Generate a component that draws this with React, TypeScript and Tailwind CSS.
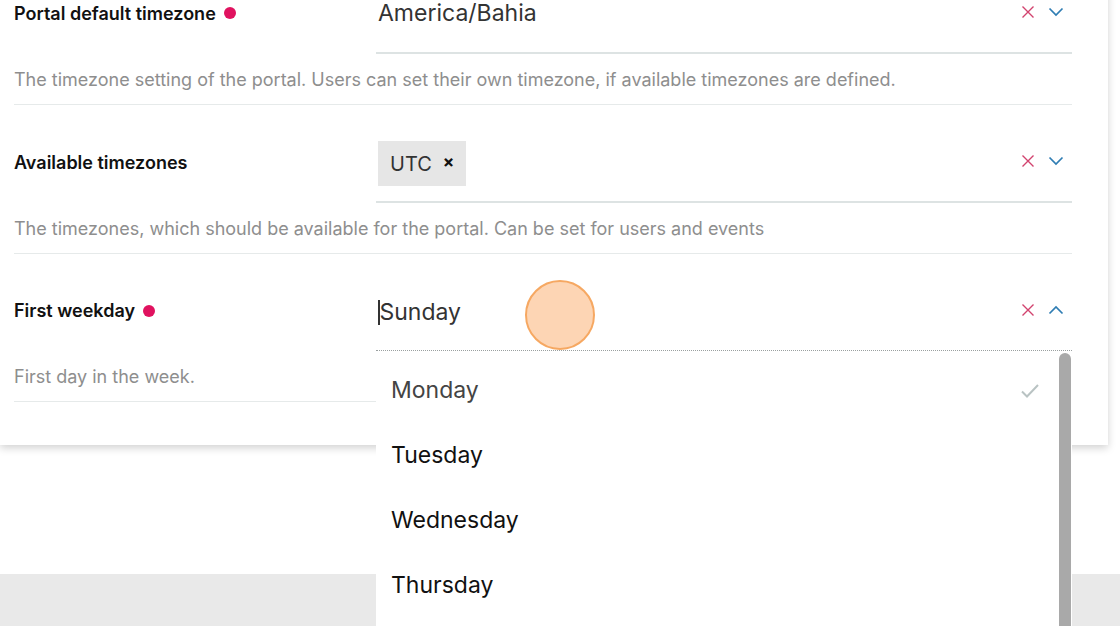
import React from "react";

const font = { fontFamily: "Inter, 'Noto Sans', sans-serif" };

function XIcon() {
  return (
    <svg width="14" height="14" viewBox="0 0 14 14" className="block">
      <path d="M1.5 1.5 L12.5 12.5 M12.5 1.5 L1.5 12.5" stroke="#d2436e" strokeWidth="1.4" fill="none" />
    </svg>
  );
}

function Chevron({ up }: { up?: boolean }) {
  return (
    <svg width="16" height="10" viewBox="0 0 16 10" className="block">
      <path
        d={up ? "M1.5 8.5 L8 2 L14.5 8.5" : "M1.5 1.5 L8 8 L14.5 1.5"}
        stroke="#2f7db3"
        strokeWidth="1.7"
        fill="none"
      />
    </svg>
  );
}

function Dot() {
  return <span className="inline-block w-[12px] h-[12px] rounded-full bg-[#e0125f] ml-[8px]" />;
}

function Row({
  label,
  required,
  desc,
  children,
  up,
  dotted,
  overlay,
}: {
  label: string;
  required?: boolean;
  desc: string;
  children: React.ReactNode;
  up?: boolean;
  dotted?: boolean;
  overlay?: React.ReactNode;
}) {
  return (
    <div className="pt-[24px]">
      <div className="flex">
        <div className="w-[362px] ml-[14px] flex items-center pb-[8px] text-[18px] font-semibold text-[#111]">
          {label}
          {required && <Dot />}
        </div>
        <div className="relative w-[696px]">
          <div
            className={
              "flex items-center pl-[2px] pr-[8px] pb-[3px] " +
              (dotted ? "h-[73px] border-b border-dotted border-[#9aa0a0]" : "h-[74px] border-b-2 border-[#dde3e3]")
            }
          >
            <div className="flex-1 flex items-center">{children}</div>
            <div className="flex items-center gap-[13px] pb-[5px]">
              <XIcon />
              <Chevron up={up} />
            </div>
          </div>
          {overlay}
        </div>
      </div>
      <div className="ml-[14px] w-[1058px] h-[51px] flex items-center border-b border-[#e6eaea] text-[18px] text-[#8e8e8e] pt-[1px]">
        {desc}
      </div>
    </div>
  );
}

function Dropdown() {
  const days = ["Monday", "Tuesday", "Wednesday", "Thursday", "Friday", "Saturday"];
  return (
    <div className="absolute left-0 top-[74px] w-[696px] h-[420px] bg-white z-10 flex">
      <div className="flex-1 pt-[6px]">
        {days.map((d, i) => (
          <div key={d} className="h-[65px] flex items-center pl-[15px] pr-[18px]">
            <span className={"flex-1 text-[23px] " + (i === 0 ? "text-[#444]" : "text-[#111]")}>{d}</span>
            {i === 0 && (
              <svg width="20" height="16" viewBox="0 0 20 16" className="block">
                <path d="M2 8.5 L7 13.5 L18 2" stroke="#b9c3c3" strokeWidth="2" fill="none" />
              </svg>
            )}
          </div>
        ))}
      </div>
      <div className="w-[14px] pt-[1px] flex justify-center">
        <div className="w-[12px] h-full rounded-t-full bg-[#a9a9a9]" />
      </div>
    </div>
  );
}

export default function App() {
  return (
    <div className="relative w-[1120px] h-[626px] overflow-hidden bg-white flex flex-col" style={font}>
      <div className="w-[1108px] -mt-[44px] bg-white pb-[43px] shadow-[0_3px_8px_rgba(0,0,0,0.18)] relative z-[1]">
        <Row label="Portal default timezone" required desc="The timezone setting of the portal. Users can set their own timezone, if available timezones are defined.">
          <span className="text-[23px] text-[#333] pb-[3px]">America/Bahia</span>
        </Row>
        <Row label="Available timezones" desc="The timezones, which should be available for the portal. Can be set for users and events">
          <div className="h-[45px] px-[12px] bg-[#e6e6e6] flex items-center gap-[11px]">
            <span className="text-[20px] text-[#333]">UTC</span>
            <span className="text-[17px] font-bold text-[#111] pb-[2px]">×</span>
          </div>
        </Row>
        <Row
          label="First weekday"
          required
          up
          dotted
          desc="First day in the week."
          overlay={
            <>
              <Dropdown />
              <div className="absolute left-[149px] top-[2px] w-[70px] h-[70px] rounded-full bg-[#fdd5b4] border-2 border-[#f6a862] z-20" />
            </>
          }
        >
          <span className="w-[1.5px] h-[25px] bg-[#333]" />
          <span className="text-[23px] text-[#333] pb-[1px]">Sunday</span>
        </Row>
      </div>
      <div className="flex-1" />
      <div className="h-[52px] bg-[#e9e9e9]" />
    </div>
  );
}
